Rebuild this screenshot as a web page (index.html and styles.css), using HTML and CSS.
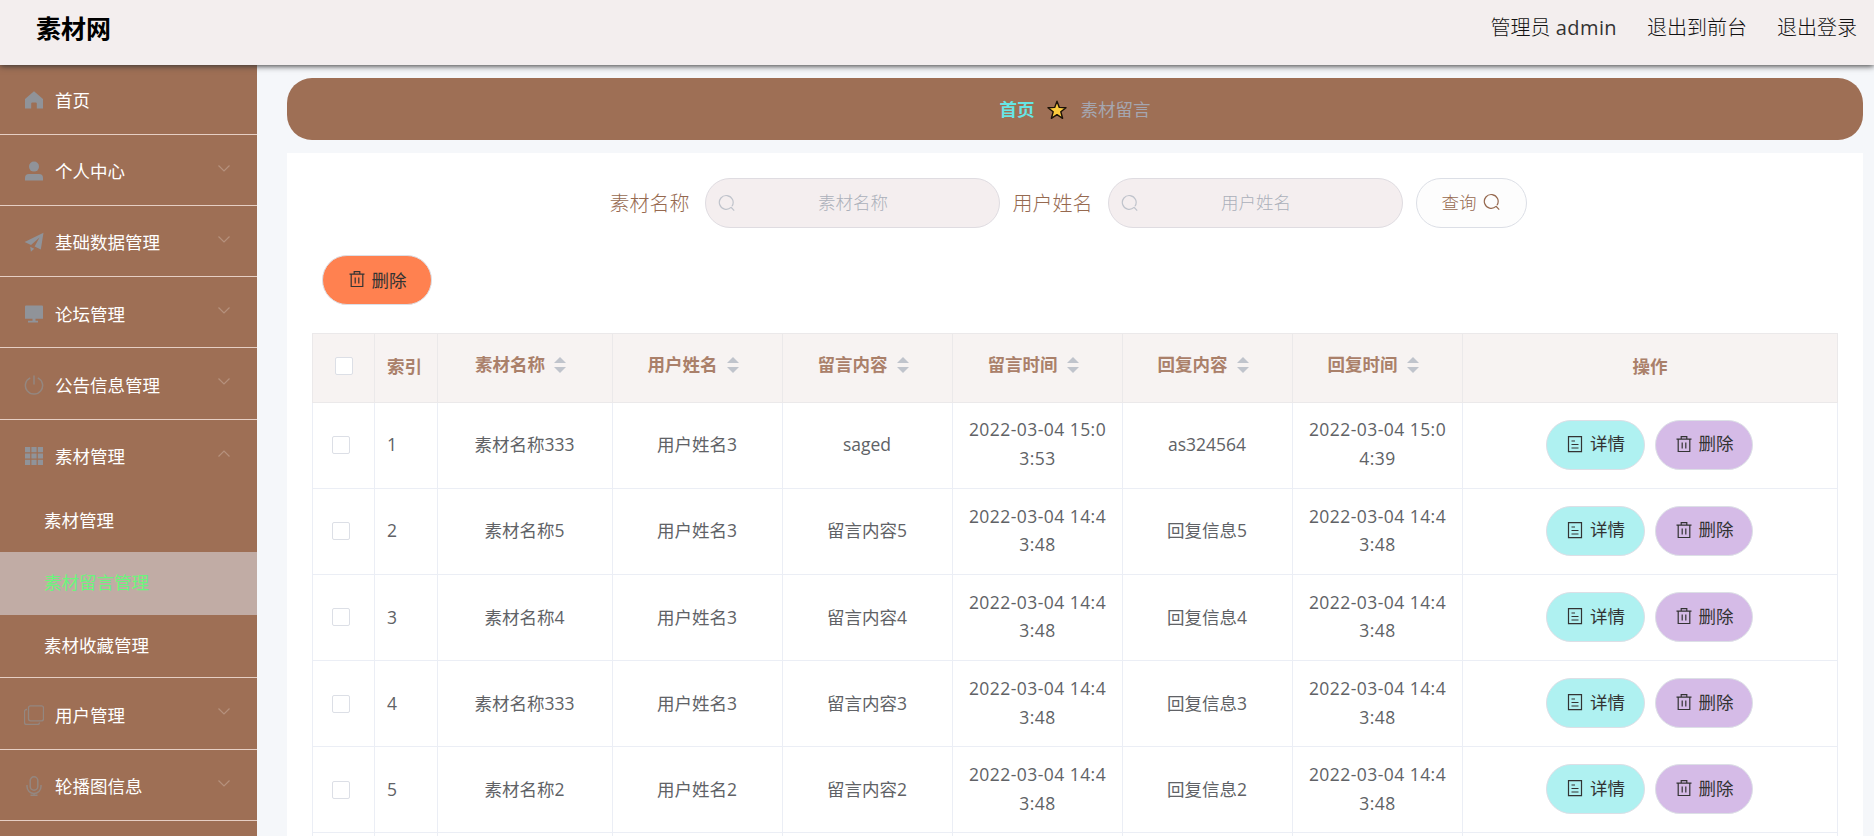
FILE: index.html
```html
<!DOCTYPE html>
<html lang="zh-CN">
<head>
    <meta charset="UTF-8">
    <meta name="viewport" content="width=device-width, initial-scale=1.0">
    <title>素材网</title>
    <link rel="stylesheet" href="styles.css">
</head>
<body>
    <!-- icons -->
    <svg class="sprite" width="0" height="0">
        <symbol id="i-home" viewBox="0 0 20 20"><path fill="currentColor" d="M10 1.200 19 9v9.600h-6.200v-5.200a1 1 0 0 0-1-1H8.200a1 1 0 0 0-1 1v5.200H1V9z"/></symbol>
        <symbol id="i-user" viewBox="0 0 20 20"><circle cx="10" cy="5.600" r="5" fill="currentColor"/><path fill="currentColor" d="M1 19.500v-2.500a4 4 0 0 1 4-4h10a4 4 0 0 1 4 4v2.500z"/></symbol>
        <symbol id="i-send" viewBox="0 0 20 20"><path fill="currentColor" d="M19.500.8 16.800 17.500l-6.200-3.100L15.500 5.600 7 13 .6 9.900zM6.200 14.800l4 2-3.300 3z"/></symbol>
        <symbol id="i-screen" viewBox="0 0 20 20"><path fill="currentColor" d="M2 1.500h16a1 1 0 0 1 1 1v12.300H1V2.500a1 1 0 0 1 1-1zM8.500 14.800h3v2h2.500v1.800H4v-1.800h4.500z"/></symbol>
        <symbol id="i-power" viewBox="0 0 20 20"><path fill="none" stroke="currentColor" stroke-width="1.500" d="M10 .5v9M6.200 2.800a8.600 8.600 0 1 0 7.600 0"/></symbol>
        <symbol id="i-grid" viewBox="0 0 20 20"><path fill="currentColor" d="M1 1h5.200v5.200H1zM7.400 1h5.200v5.200H7.400zM13.800 1H19v5.200h-5.200zM1 7.400h5.200v5.200H1zM7.400 7.400h5.200v5.200H7.400zM13.800 7.400H19v5.200h-5.200zM1 13.800h5.200V19H1zM7.400 13.800h5.200V19H7.400zM13.800 13.800H19V19h-5.200z"/></symbol>
        <symbol id="i-copy" viewBox="0 0 20 20"><path fill="none" stroke="currentColor" stroke-width="1.300" d="M6.500.8h11a2 2 0 0 1 2 2v11a2 2 0 0 1-2 2h-11a2 2 0 0 1-2-2v-11a2 2 0 0 1 2-2zM3 4.500H2.500a2 2 0 0 0-2 2v11a2 2 0 0 0 2 2h11a2 2 0 0 0 2-2V17.500"/></symbol>
        <symbol id="i-mic" viewBox="0 0 20 20"><path fill="none" stroke="currentColor" stroke-width="1.500" d="M10 .8a3.800 3.800 0 0 1 3.800 3.800v5.800a3.800 3.800 0 0 1-7.600 0V4.600A3.800 3.800 0 0 1 10 .8zM3 9v1.500a7 7 0 0 0 14 0V9M10 17.500v2M6.500 19.300h7"/></symbol>
        <symbol id="i-down" viewBox="0 0 12 7"><path fill="none" stroke="currentColor" stroke-width="1.200" d="m.5.5 5.500 5.500L11.500.5"/></symbol>
        <symbol id="i-up" viewBox="0 0 12 7"><path fill="none" stroke="currentColor" stroke-width="1.200" d="M.5 6.500 6 1l5.500 5.500"/></symbol>
        <symbol id="i-search" viewBox="0 0 18 18"><path fill="none" stroke="currentColor" stroke-width="1.200" d="M13 13.400a6.900 6.900 0 1 1 1-1.200M12.800 13l3.400 3.600"/></symbol>
        <symbol id="i-trash" viewBox="0 0 18 18"><path fill="none" stroke="currentColor" stroke-width="1.200" d="M1.500 4.200h15M3.200 4.200v12.300h11.600V4.200M6.200 4V1.700h5.600V4M7.200 7.500v6M10.800 7.500v6"/></symbol>
        <symbol id="i-doc" viewBox="0 0 18 18"><path fill="none" stroke="currentColor" stroke-width="1.200" d="M2.500 1.600h13v15h-13zM5.500 6h3.500M5.500 9.500h7M5.500 13h7"/></symbol>
        <symbol id="i-star" viewBox="0 0 20 20"><path fill="#fccb3d" stroke="#1c1208" stroke-width="1.400" stroke-linejoin="round" d="m10 1.200 2.300 6.200 6.700.3-5.200 4.100 1.800 6.500L10 14.600l-5.600 3.700 1.800-6.500L1 7.700l6.700-.3z"/></symbol>
    </svg>

    <header class="navbar">
        <h1 class="title">素材网</h1>
        <nav class="user-menu">
            <span>管理员 <span class="user-name">admin</span></span>
            <span>退出到前台</span>
            <span>退出登录</span>
        </nav>
    </header>

    <div class="wrapper">
        <aside class="sidebar">
            <div class="menu-item"><div class="menu-title"><svg class="icon"><use href="#i-home"/></svg><span>首页</span></div></div>
            <div class="menu-item"><div class="menu-title"><svg class="icon"><use href="#i-user"/></svg><span>个人中心</span><svg class="arrow"><use href="#i-down"/></svg></div></div>
            <div class="menu-item"><div class="menu-title"><svg class="icon"><use href="#i-send"/></svg><span>基础数据管理</span><svg class="arrow"><use href="#i-down"/></svg></div></div>
            <div class="menu-item"><div class="menu-title"><svg class="icon"><use href="#i-screen"/></svg><span>论坛管理</span><svg class="arrow"><use href="#i-down"/></svg></div></div>
            <div class="menu-item"><div class="menu-title"><svg class="icon thin"><use href="#i-power"/></svg><span>公告信息管理</span><svg class="arrow"><use href="#i-down"/></svg></div></div>
            <div class="menu-item">
                <div class="menu-title"><svg class="icon"><use href="#i-grid"/></svg><span>素材管理</span><svg class="arrow"><use href="#i-up"/></svg></div>
                <ul class="submenu">
                    <li>素材管理</li>
                    <li class="active">素材留言管理</li>
                    <li>素材收藏管理</li>
                </ul>
            </div>
            <div class="menu-item"><div class="menu-title"><svg class="icon thin"><use href="#i-copy"/></svg><span>用户管理</span><svg class="arrow"><use href="#i-down"/></svg></div></div>
            <div class="menu-item"><div class="menu-title"><svg class="icon thin"><use href="#i-mic"/></svg><span>轮播图信息</span><svg class="arrow"><use href="#i-down"/></svg></div></div>
        </aside>

        <main class="main">
            <div class="breadcrumb">
                <b>首页</b>
                <svg class="star"><use href="#i-star"/></svg>
                <span>素材留言</span>
            </div>

            <section class="content">
                <form class="search-form">
                    <label>素材名称</label>
                    <div class="search-input"><svg class="btn-icon"><use href="#i-search"/></svg><input type="text" placeholder="素材名称"></div>
                    <label>用户姓名</label>
                    <div class="search-input"><svg class="btn-icon"><use href="#i-search"/></svg><input type="text" placeholder="用户姓名"></div>
                    <button type="button" class="btn btn-search">查询<svg class="btn-icon"><use href="#i-search"/></svg></button>
                </form>

                <div class="toolbar">
                    <button class="btn btn-remove"><svg class="btn-icon"><use href="#i-trash"/></svg>删除</button>
                </div>

                <table class="table">
                    <colgroup>
                        <col class="col-check"><col class="col-index"><col class="col-name">
                        <col class="col-text"><col class="col-text"><col class="col-text"><col class="col-text"><col class="col-text">
                        <col class="col-action">
                    </colgroup>
                    <thead>
                        <tr>
                            <th><span class="checkbox"></span></th>
                            <th class="index">索引</th>
                            <th><div class="sortable">素材名称<span class="sort"></span></div></th>
                            <th><div class="sortable">用户姓名<span class="sort"></span></div></th>
                            <th><div class="sortable">留言内容<span class="sort"></span></div></th>
                            <th><div class="sortable">留言时间<span class="sort"></span></div></th>
                            <th><div class="sortable">回复内容<span class="sort"></span></div></th>
                            <th><div class="sortable">回复时间<span class="sort"></span></div></th>
                            <th>操作</th>
                        </tr>
                    </thead>
                    <tbody>
                        <tr>
                            <td class="check"><span class="checkbox"></span></td>
                            <td class="index">1</td>
                            <td>素材名称333</td>
                            <td>用户姓名3</td>
                            <td>saged</td>
                            <td class="time">2022-03-04 15:03:53</td>
                            <td>as324564</td>
                            <td class="time">2022-03-04 15:04:39</td>
                            <td><div class="actions"><button class="btn btn-detail"><svg class="btn-icon"><use href="#i-doc"/></svg>详情</button><button class="btn btn-delete"><svg class="btn-icon"><use href="#i-trash"/></svg>删除</button></div></td>
                        </tr>
                        <tr>
                            <td class="check"><span class="checkbox"></span></td>
                            <td class="index">2</td>
                            <td>素材名称5</td>
                            <td>用户姓名3</td>
                            <td>留言内容5</td>
                            <td class="time">2022-03-04 14:43:48</td>
                            <td>回复信息5</td>
                            <td class="time">2022-03-04 14:43:48</td>
                            <td><div class="actions"><button class="btn btn-detail"><svg class="btn-icon"><use href="#i-doc"/></svg>详情</button><button class="btn btn-delete"><svg class="btn-icon"><use href="#i-trash"/></svg>删除</button></div></td>
                        </tr>
                        <tr>
                            <td class="check"><span class="checkbox"></span></td>
                            <td class="index">3</td>
                            <td>素材名称4</td>
                            <td>用户姓名3</td>
                            <td>留言内容4</td>
                            <td class="time">2022-03-04 14:43:48</td>
                            <td>回复信息4</td>
                            <td class="time">2022-03-04 14:43:48</td>
                            <td><div class="actions"><button class="btn btn-detail"><svg class="btn-icon"><use href="#i-doc"/></svg>详情</button><button class="btn btn-delete"><svg class="btn-icon"><use href="#i-trash"/></svg>删除</button></div></td>
                        </tr>
                        <tr>
                            <td class="check"><span class="checkbox"></span></td>
                            <td class="index">4</td>
                            <td>素材名称333</td>
                            <td>用户姓名3</td>
                            <td>留言内容3</td>
                            <td class="time">2022-03-04 14:43:48</td>
                            <td>回复信息3</td>
                            <td class="time">2022-03-04 14:43:48</td>
                            <td><div class="actions"><button class="btn btn-detail"><svg class="btn-icon"><use href="#i-doc"/></svg>详情</button><button class="btn btn-delete"><svg class="btn-icon"><use href="#i-trash"/></svg>删除</button></div></td>
                        </tr>
                        <tr>
                            <td class="check"><span class="checkbox"></span></td>
                            <td class="index">5</td>
                            <td>素材名称2</td>
                            <td>用户姓名2</td>
                            <td>留言内容2</td>
                            <td class="time">2022-03-04 14:43:48</td>
                            <td>回复信息2</td>
                            <td class="time">2022-03-04 14:43:48</td>
                            <td><div class="actions"><button class="btn btn-detail"><svg class="btn-icon"><use href="#i-doc"/></svg>详情</button><button class="btn btn-delete"><svg class="btn-icon"><use href="#i-trash"/></svg>删除</button></div></td>
                        </tr>
                        <tr><td></td><td></td><td></td><td></td><td></td><td></td><td></td><td></td><td></td></tr>
                    </tbody>
                </table>
            </section>
        </main>
    </div>
</body>
</html>
```
FILE: styles.css
```css
* {
    box-sizing: border-box;
    margin: 0;
    padding: 0;
}

body {
    display: flex;
    flex-direction: column;
    height: 100vh;
    overflow: hidden;
    background: #f5f7fa;
    font-family: "Open Sans", "Noto Sans CJK SC", sans-serif;
    font-size: 17.5px;
    color: #606266;
}

.sprite {
    display: none;
}

button,
input {
    font: inherit;
}

/* top bar */
.navbar {
    position: relative;
    z-index: 2;
    flex: none;
    display: flex;
    justify-content: space-between;
    align-items: center;
    height: 65px;
    padding: 0 17px 9px 36px;
    background: #f3eeee;
    box-shadow: 0 1px 6px #333;
}

.title {
    padding-bottom: 1px;
    font-size: 25px;
    line-height: 40px;
    color: #000;
}

.user-menu {
    display: flex;
    gap: 30px;
    font-size: 20px;
    font-weight: 300;
    line-height: 40px;
    color: #111;
}

.user-name {
    font-weight: 400;
    letter-spacing: 0.4px;
    color: #333;
}

.wrapper {
    flex: 1;
    display: flex;
    min-height: 0;
}

/* sidebar */
.sidebar {
    flex: none;
    width: 257px;
    margin-top: -1.75px;
    overflow: hidden;
    background: #9e6f55;
    color: #fff;
}

.menu-item {
    border-bottom: 1.25px solid #e6cfc4;
}

.menu-title {
    display: flex;
    align-items: center;
    height: 70.25px;
    padding: 0 27px 0 24px;
}

.menu-title span {
    flex: 1;
    padding: 2px 0 0 11px;
}

.icon {
    width: 20px;
    height: 20px;
    margin-top: 3px;
    color: #909399;
}

.thin {
    color: #948780;
}

.arrow {
    width: 12px;
    height: 7px;
    margin-bottom: 3px;
    color: #b5917d;
}

.submenu {
    list-style: none;
}

.submenu li {
    height: 62.5px;
    padding-left: 44px;
    line-height: 61px;
}

.submenu .active {
    background: #c1aca5;
    color: #6bf57c;
}

/* main area */
.main {
    flex: 1;
    display: flex;
    flex-direction: column;
    padding: 13px 11px 0 30px;
}

.breadcrumb {
    flex: none;
    display: flex;
    justify-content: center;
    align-items: center;
    height: 62px;
    margin-bottom: 13px;
    padding-bottom: 1px;
    border-radius: 25px;
    background: #9e6f55;
    color: #a5a6b0;
}

.breadcrumb b {
    color: #66e5e6;
}

.star {
    width: 20px;
    height: 20px;
    margin: 2px 14px 0 12px;
}

.content {
    flex: 1;
    min-height: 0;
    overflow: hidden;
    padding: 25px;
    background: #fff;
}

.search-form {
    display: flex;
    justify-content: center;
    align-items: center;
    height: 50px;
    padding-right: 14px;
    color: #96694f;
    font-weight: 300;
}

.search-form label {
    padding-top: 2px;
    font-size: 20px;
    line-height: 40px;
}

.search-input {
    display: flex;
    align-items: center;
    width: 295px;
    height: 50px;
    margin: 0 13px 0 15px;
    padding: 0 12px;
    border: 1px solid #dfdce1;
    border-radius: 25px;
    background: #f4eeef;
    color: #c0c4cc;
}

.search-input input {
    flex: 1;
    width: 100%;
    padding: 0 16px 2px 0;
    border: none;
    outline: none;
    background: none;
    text-align: center;
}

.search-input input::placeholder {
    color: #abb0ba;
}

.btn {
    display: flex;
    justify-content: center;
    align-items: center;
    gap: 6px;
    height: 50px;
    padding-bottom: 2px;
    border: 1px solid #dcdfe6;
    border-radius: 25px;
    color: #333;
    cursor: pointer;
}

.btn-icon {
    flex: none;
    width: 18px;
    height: 18px;
}

.btn-search {
    width: 111px;
    padding-bottom: 3px;
    background: #fdfdfd;
    color: #96694f;
}

.toolbar {
    padding: 27px 0 27.5px 10px;
}

.btn-remove {
    width: 110px;
    background: #ff8150;
}

/* table */
.table {
    width: 1526px;
    table-layout: fixed;
    border-collapse: collapse;
}

.col-check {
    width: 62px;
}

.col-index {
    width: 63px;
}

.col-name {
    width: 175px;
}

.col-text {
    width: 170px;
}

.table th,
.table td {
    border: 1px solid #ebeef5;
    text-align: center;
    vertical-align: middle;
    line-height: 28.75px;
}

.table th {
    height: 69px;
    padding-bottom: 2px;
    border-color: #ebe9ea;
    background: #f7f3f2;
    color: #aa806a;
}

.table td {
    height: 86.2px;
    padding: 0 13px 1px 12px;
}

.table .index {
    padding-left: 12px;
    text-align: left;
}

.table .check {
    padding: 0 20px 4px 19px;
    text-align: left;
}

.table .time {
    padding: 0 12px 2px;
    letter-spacing: 0.45px;
    word-break: break-all;
}

.checkbox {
    display: inline-block;
    width: 18px;
    height: 18px;
    border: 1px solid #dcdfe6;
    border-radius: 2px;
    background: #fff;
    vertical-align: middle;
}

th .checkbox {
    margin-bottom: 4px;
}

.sortable {
    display: flex;
    justify-content: center;
    align-items: center;
    padding-bottom: 4px;
}

.sort {
    display: flex;
    flex-direction: column;
    align-items: center;
    gap: 4px;
    width: 30px;
}

.sort::before,
.sort::after {
    content: "";
    border: 6.25px solid transparent;
}

.sort::before {
    border-top: none;
    border-bottom-color: #c0c4cc;
}

.sort::after {
    border-bottom: none;
    border-top-color: #c0c4cc;
}

.actions {
    display: flex;
    justify-content: center;
    gap: 10px;
}

.btn-detail {
    width: 99px;
    background: #aff1f1;
}

.btn-delete {
    width: 98px;
    background: #d5bbe7;
}
```
